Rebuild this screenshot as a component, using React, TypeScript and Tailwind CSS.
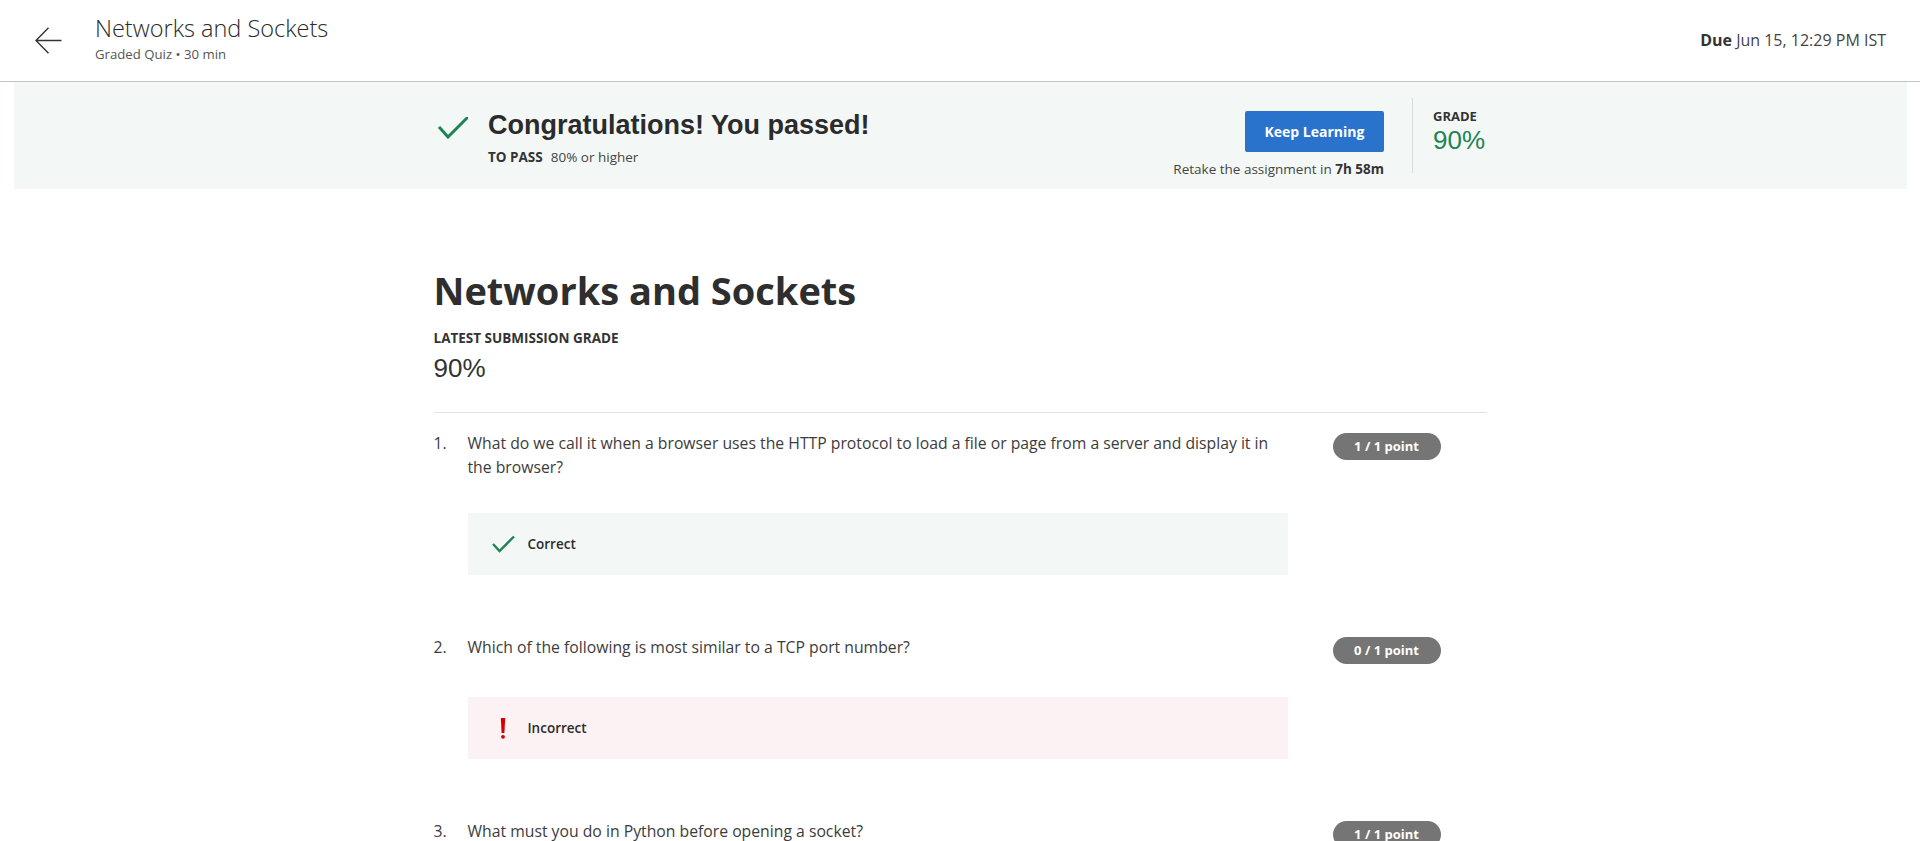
type Result = "correct" | "incorrect" | null;

type Question = {
  id: number;
  text: string;
  score: string;
  result: Result;
};

const questions: Question[] = [
  {
    id: 1,
    text: "What do we call it when a browser uses the HTTP protocol to load a file or page from a server and display it in the browser?",
    score: "1 / 1 point",
    result: "correct",
  },
  {
    id: 2,
    text: "Which of the following is most similar to a TCP port number?",
    score: "0 / 1 point",
    result: "incorrect",
  },
  {
    id: 3,
    text: "What must you do in Python before opening a socket?",
    score: "1 / 1 point",
    result: null,
  },
];

const BackArrow = () => (
  <svg viewBox="0 0 27 27" className="w-[27px] h-[27px]" fill="none">
    <path
      d="M13.5 0.8 L1 13.5 L13.5 26.2 M1 13.5 H26.5"
      stroke="#333"
      strokeWidth="1.4"
      strokeLinejoin="miter"
    />
  </svg>
);

const CheckMark = ({ className }: { className?: string }) => (
  <svg viewBox="0 0 30 22" className={className} fill="none">
    <path
      d="M2 11 L10 20 L29 1"
      stroke="#1f8354"
      strokeWidth="3"
      strokeLinecap="square"
    />
  </svg>
);

const SmallCheck = () => (
  <svg viewBox="0 0 23 18" className="w-[23px] h-[18px]" fill="none">
    <path d="M1 9 L7.5 16 L22 1.5" stroke="#1f8354" strokeWidth="2.4" />
  </svg>
);

const Bang = () => (
  <svg viewBox="0 0 23 22" className="w-[23px] h-[22px]">
    <path d="M8.8 1 H13.2 L12.4 16 H9.6 Z" fill="#d30001" />
    <circle cx="11" cy="19.8" r="1.9" fill="#d30001" />
  </svg>
);

const ResultBox = ({ result }: { result: Result }) => {
  if (!result) return null;
  const ok = result === "correct";
  return (
    <div
      className={
        ok
          ? "mt-[34px] h-[62px] flex items-center pl-[24px] bg-[#f3f8f6]"
          : "mt-[34px] h-[62px] flex items-center pl-[24px] bg-[#fdf2f3]"
      }
    >
      {ok ? <SmallCheck /> : <Bang />}
      <span className="ml-[13px] text-[13.5px] font-semibold text-[#2c2c2c]">
        {ok ? "Correct" : "Incorrect"}
      </span>
    </div>
  );
};

export default function App() {
  return (
    <div className="min-h-screen bg-white text-[#333] font-['Open_Sans',sans-serif]">
      {/* top bar */}
      <header className="h-[82px] border-b border-[#c4c4c4] flex items-start">
        <button className="ml-[35px] mt-[27px] w-[27px] h-[27px] flex items-center justify-center">
          <BackArrow />
        </button>
        <div className="ml-[33px] mt-[14px]">
          <h1 className="text-[23.5px] leading-[28px] font-light text-[#2a2a2a]">
            Networks and Sockets
          </h1>
          <p className="mt-[3px] text-[13.2px] leading-[18px] text-[#555]">
            Graded Quiz • 30 min
          </p>
        </div>
        <div className="ml-auto mr-[34px] mt-[28px] text-[16px] leading-[24px] text-[#444]">
          <span className="font-bold text-[#333]">Due</span> Jun 15, 12:29 PM IST
        </div>
      </header>

      {/* pass banner */}
      <section className="ml-[14px] mr-[13px] h-[107px] bg-[#f3f8f6] pt-[16px]">
        <div className="w-[1053px] mx-auto flex items-start">
          <CheckMark className="ml-[4px] mt-[19px] w-[30px] h-[22px]" />
          <div className="ml-[20px] mt-[11px]">
            <h2 className="font-['Liberation_Sans',Arial,sans-serif] font-bold text-[27px] leading-[32px] text-[#2b2b2b]">
              Congratulations! You passed!
            </h2>
            <p className="mt-[7px] text-[13.5px] leading-[18px] text-[#444]">
              <span className="font-bold text-[#333]">TO PASS</span>
              <span className="ml-[8px]">80% or higher</span>
            </p>
          </div>
          <div className="ml-auto flex items-start">
            <div className="mt-[13px] flex flex-col items-end">
              <button className="w-[139px] h-[41px] rounded-[2px] bg-[#2a73cc] text-white text-[14px] font-bold">
                Keep Learning
              </button>
              <p className="mt-[8px] text-[13.5px] leading-[18px] text-[#444]">
                Retake the assignment in{" "}
                <span className="font-bold text-[#333]">7h 58m</span>
              </p>
            </div>
            <div className="ml-[28px] w-px h-[75px] bg-[#dcdcdc]" />
            <div className="ml-[20px] w-[54px] mt-[10px]">
              <p className="text-[13px] leading-[17px] font-bold text-[#333]">GRADE</p>
              <p className="font-['Liberation_Sans',Arial,sans-serif] text-[26px] leading-[30px] text-[#1f8354]">
                90%
              </p>
            </div>
          </div>
        </div>
      </section>

      {/* main */}
      <main className="w-[1053px] mx-auto pt-[78px]">
        <h1 className="text-[38px] leading-[46px] font-bold text-[#2e2e2e]">
          Networks and Sockets
        </h1>
        <p className="mt-[16px] text-[13.5px] leading-[18px] font-bold text-[#333]">
          LATEST SUBMISSION GRADE
        </p>
        <p className="mt-[6px] font-['Liberation_Sans',Arial,sans-serif] text-[26px] leading-[30px] text-[#333]">
          90%
        </p>
        <div className="mt-[29px] h-px bg-[#e3e3e3]" />

        <div className="pt-[18px] flex flex-col gap-[60px]">
          {questions.map((q) => (
            <div key={q.id} className="flex items-start">
              <div className="w-[34px] text-[15.75px] leading-[24px] text-[#3c3c3c]">
                {q.id}.
              </div>
              <div className="w-[820px]">
                <p className="min-h-[28px] text-[15.75px] leading-[24px] text-[#3c3c3c]">
                  {q.text}
                </p>
                <ResultBox result={q.result} />
              </div>
              <div className="ml-[45px] mt-[2px] w-[108px] h-[27px] rounded-full bg-[#757575] flex items-center justify-center text-[13px] font-bold text-white">
                {q.score}
              </div>
            </div>
          ))}
        </div>
      </main>
    </div>
  );
}
